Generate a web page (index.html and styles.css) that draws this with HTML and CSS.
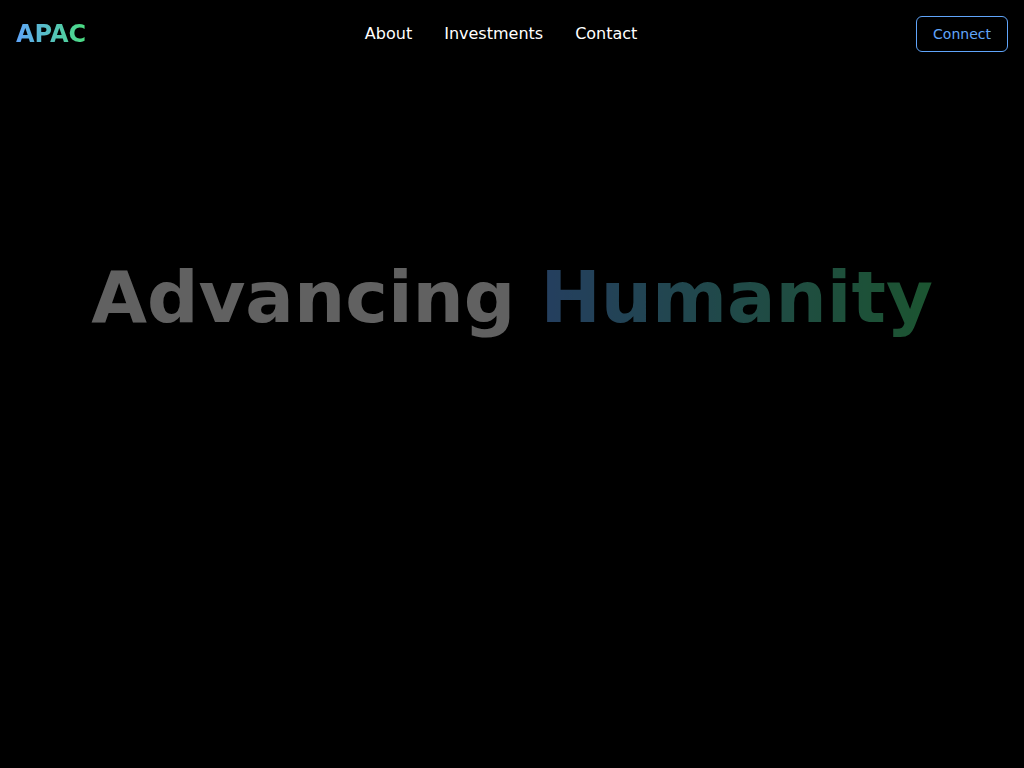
FILE: index.html
```html
<!DOCTYPE html>
<html lang="en">
<head>
    <meta charset="UTF-8">
    <meta name="viewport" content="width=device-width, initial-scale=1.0">
    <title>APAC</title>
    <link rel="stylesheet" href="styles.css">
</head>
<body>
    <header class="header">
        <div class="logo gradient-text">APAC</div>
        <nav class="nav">
            <a href="#about">About</a>
            <a href="#investments">Investments</a>
            <a href="#contact">Contact</a>
        </nav>
        <button class="connect-btn" type="button">Connect</button>
    </header>

    <main class="hero">
        <h1 class="hero-title">Advancing <span class="gradient-text">Humanity</span></h1>
    </main>
</body>
</html>
```

FILE: styles.css
```css
* {
    box-sizing: border-box;
}

body {
    margin: 0;
    min-height: 100vh;
    display: flex;
    flex-direction: column;
    background: #000;
    color: #fff;
    font-family: "DejaVu Sans", sans-serif;
    font-size: 16px;
    line-height: 24px;
}

.header {
    display: flex;
    justify-content: space-between;
    align-items: center;
    padding: 16px;
}

.gradient-text {
    background: linear-gradient(to right, #60a5fa, #4ade80);
    -webkit-background-clip: text;
    background-clip: text;
    color: transparent;
}

.logo {
    font-size: 24px;
    line-height: 32px;
    font-weight: bold;
}

.nav {
    display: flex;
    gap: 32px;
}

.nav a {
    color: #fff;
    text-decoration: none;
}

.nav a:hover {
    color: #60a5fa;
}

.connect-btn {
    height: 36px;
    padding: 0 16px;
    border: 1px solid #60a5fa;
    border-radius: 6px;
    background: transparent;
    color: #60a5fa;
    font-family: inherit;
    font-size: 14px;
    line-height: 20px;
    cursor: pointer;
}

.connect-btn:hover {
    background: #60a5fa;
    color: #000;
}

.hero {
    flex: 1;
    padding: 184px 16px 0;
    text-align: center;
}

.hero-title {
    margin: 0;
    font-size: 72px;
    line-height: 90px;
    font-weight: bold;
    opacity: 0.38;
}
```
